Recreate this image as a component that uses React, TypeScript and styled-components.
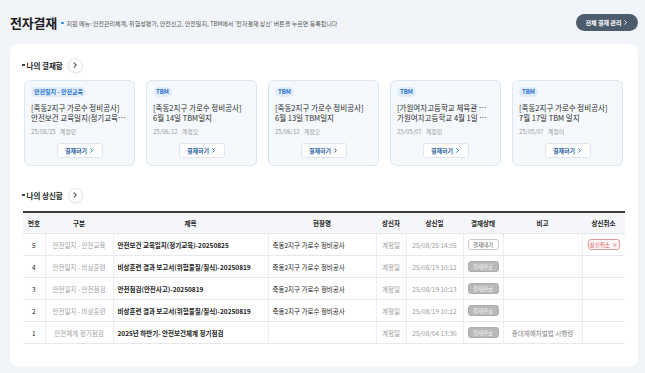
import React from "react";
import styled, { createGlobalStyle } from "styled-components";

const GlobalStyle = createGlobalStyle`
  body {
    margin: 0;
    background: #f1f4f9;
    font-family: "Noto Sans CJK KR", "Noto Sans", sans-serif;
    color: #222;
  }
`;

const Page = styled.div`
  width: 645px;
  height: 373px;
  overflow: hidden;
`;

const Header = styled.div`
  height: 44px;
  display: flex;
  align-items: center;
  padding: 0 7px 0 10px;
`;

const Title = styled.h1`
  margin: 0;
  font-size: 13px;
  font-weight: 700;
  color: #1d1d1d;
  letter-spacing: -0.2px;
`;

const Hint = styled.span`
  margin-left: 4px;
  font-size: 6px;
  color: #555;
  display: flex;
  align-items: center;
  margin-top: 2px;
  &::before {
    content: "";
    width: 2.5px;
    height: 2.5px;
    border-radius: 50%;
    background: #2b8ad9;
    margin-right: 3px;
  }
`;

const ManageButton = styled.button`
  margin-left: auto;
  width: 62px;
  height: 17px;
  border: none;
  border-radius: 9px;
  background: #4c5c6c;
  color: #fff;
  font-family: inherit;
  font-size: 6px;
  font-weight: 700;
  padding: 0;
  display: flex;
  align-items: center;
  justify-content: center;
  gap: 2px;
`;

const Panel = styled.div`
  margin: 0 7px 0 10px;
  background: #fff;
  border-radius: 8px;
  padding: 14px 13px 24px 12px;
  height: 322px;
  box-sizing: border-box;
`;

const SectionHead = styled.div<{ $top?: number }>`
  display: flex;
  align-items: center;
  height: 14px;
  margin-top: ${(p) => p.$top ?? 0}px;
`;

const SectionTitle = styled.span`
  display: flex;
  align-items: center;
  font-size: 7.5px;
  font-weight: 700;
  color: #1d1d1d;
  &::before {
    content: "";
    width: 2.5px;
    height: 2.5px;
    background: #444;
    margin-right: 2px;
  }
`;

const CircleButton = styled.span`
  margin-left: 5px;
  width: 13px;
  height: 13px;
  border-radius: 50%;
  border: 1px solid #e3e6ea;
  background: #fff;
  box-shadow: 0 1px 2px rgba(0, 0, 0, 0.06);
  display: flex;
  align-items: center;
  justify-content: center;
`;

const CardRow = styled.div`
  display: grid;
  grid-template-columns: repeat(5, 111px);
  gap: 11px;
  margin-top: 8px;
  padding-left: 2px;
`;

const Card = styled.div`
  height: 86px;
  box-sizing: border-box;
  border: 1px solid #d9e6f3;
  border-radius: 6px;
  background: #f5f9fd;
  padding: 6px 6px 0 6px;
  display: flex;
  flex-direction: column;
`;

const Badge = styled.span`
  align-self: flex-start;
  height: 10px;
  line-height: 10px;
  padding: 0 3px;
  border-radius: 5px;
  background: #e2edfa;
  color: #1f6fcf;
  font-size: 6px;
  font-weight: 700;
`;

const CardLine = styled.div`
  font-size: 7.5px;
  line-height: 10px;
  color: #2a2a2a;
  white-space: nowrap;
`;

const CardTitle = styled.div`
  margin-top: 6px;
`;

const CardMeta = styled.div`
  margin-top: 5px;
  font-size: 6px;
  line-height: 8px;
  color: #9a9a9a;
  span + span {
    margin-left: 4px;
  }
`;

const ApproveButton = styled.button`
  align-self: center;
  margin-top: 7px;
  width: 46px;
  height: 15px;
  padding: 0;
  border: 1px solid #dfe5ec;
  border-radius: 3px;
  background: #fff;
  color: #2a5ea5;
  font-family: inherit;
  font-size: 6px;
  font-weight: 700;
  display: flex;
  align-items: center;
  justify-content: center;
  gap: 2px;
`;

const Table = styled.table`
  margin-top: 9px;
  margin-left: 1px;
  width: 602px;
  table-layout: fixed;
  border-collapse: collapse;
  border-top: 2px solid #3b3b3b;
`;

const Th = styled.th`
  height: 20px;
  background: #f4f6f9;
  font-size: 6.5px;
  font-weight: 700;
  color: #222;
  padding: 0;
  text-align: center;
  border-bottom: 1px solid #e6e8ec;
`;

const Td = styled.td<{ $align?: string; $tone?: string; $bold?: boolean }>`
  height: 21px;
  padding: 0 ${(p) => (p.$align === "left" ? "4px" : "0")};
  font-size: 6.5px;
  text-align: ${(p) => p.$align ?? "center"};
  color: ${(p) => p.$tone ?? "#222"};
  font-weight: ${(p) => (p.$bold ? 700 : 400)};
  border-bottom: 1px solid #e6e8ec;
  border-right: 1px solid #eceef1;
  white-space: nowrap;
  &:last-child {
    border-right: none;
  }
`;

const Status = styled.span<{ $done?: boolean }>`
  display: inline-block;
  width: 31px;
  height: 11px;
  line-height: 10px;
  box-sizing: border-box;
  border-radius: 3px;
  font-size: 5.5px;
  border: 1px solid ${(p) => (p.$done ? "#adadad" : "#c9c9c9")};
  background: ${(p) => (p.$done ? "#b8b8b8" : "#fff")};
  color: ${(p) => (p.$done ? "#f4f4f4" : "#555")};
`;

const CancelTag = styled.span`
  display: inline-flex;
  align-items: center;
  justify-content: center;
  gap: 2px;
  width: 32px;
  height: 11px;
  box-sizing: border-box;
  border-radius: 3px;
  border: 1px solid #e39a9a;
  background: #fff6f6;
  color: #d05656;
  font-size: 5.5px;
`;

const Chevron = ({ size = 5, color = "currentColor" }: { size?: number; color?: string }) => (
  <svg width={size} height={size} viewBox="0 0 10 10" fill="none">
    <path d="M3.5 1.5 L7 5 L3.5 8.5" stroke={color} strokeWidth="1.8" strokeLinecap="round" strokeLinejoin="round" />
  </svg>
);

const cards = [
  { badge: "안전일지 - 안전교육", site: "[죽동2지구 가로수 정비공사]", title: "안전보건 교육일지(정기교육…", date: "25/08/25", user: "계정민" },
  { badge: "TBM", site: "[죽동2지구 가로수 정비공사]", title: "6월 14일 TBM일지", date: "25/06/12", user: "계정오" },
  { badge: "TBM", site: "[죽동2지구 가로수 정비공사]", title: "6월 13일 TBM일지", date: "25/06/12", user: "계정오" },
  { badge: "TBM", site: "[가원여자고등학교 체육관 …", title: "가원여자고등학교 4월 1일 …", date: "25/05/07", user: "계정민" },
  { badge: "TBM", site: "[죽동2지구 가로수 정비공사]", title: "7월 17일 TBM 일지", date: "25/05/07", user: "계정이" },
];

const rows = [
  { no: 5, kind: "안전일지 - 안전교육", title: "안전보건 교육일지(정기교육)-20250825", site: "죽동2지구 가로수 정비공사", date: "25/08/25 14:05", done: false, note: "", cancel: true },
  { no: 4, kind: "안전일지 - 비상훈련", title: "비상훈련 결과 보고서(위험물질/질식)-20250819", site: "죽동2지구 가로수 정비공사", date: "25/08/19 10:12", done: true, note: "", cancel: false },
  { no: 3, kind: "안전일지 - 안전점검", title: "안전점검(안전사고)-20250819", site: "죽동2지구 가로수 정비공사", date: "25/08/19 10:13", done: true, note: "", cancel: false },
  { no: 2, kind: "안전일지 - 비상훈련", title: "비상훈련 결과 보고서(위험물질/질식)-20250819", site: "죽동2지구 가로수 정비공사", date: "25/08/19 10:12", done: true, note: "", cancel: false },
  { no: 1, kind: "안전체계 정기점검", title: "2025년 하반기- 안전보건체계 정기점검", site: "", date: "25/08/04 13:30", done: true, note: "중대재해처벌법 시행령", cancel: false },
];

const cols = [22, 68, 155, 108, 30, 57, 40, 79, 43];
const heads = ["번호", "구분", "제목", "현장명", "상신자", "상신일", "결재상태", "비고", "상신취소"];

export default function App() {
  return (
    <Page>
      <GlobalStyle />
      <Header>
        <Title>전자결재</Title>
        <Hint>지원 메뉴: 안전관리체계, 위험성평가, 안전신고, 안전일지, TBM에서 '전자결재 상신' 버튼을 누르면 등록됩니다</Hint>
        <ManageButton>
          전체 결재 관리 <Chevron size={5} />
        </ManageButton>
      </Header>
      <Panel>
        <SectionHead>
          <SectionTitle>나의 결재함</SectionTitle>
          <CircleButton>
            <Chevron size={6} color="#555" />
          </CircleButton>
        </SectionHead>
        <CardRow>
          {cards.map((c, i) => (
            <Card key={i}>
              <Badge>{c.badge}</Badge>
              <CardTitle>
                <CardLine>{c.site}</CardLine>
                <CardLine>{c.title}</CardLine>
              </CardTitle>
              <CardMeta>
                <span>{c.date}</span>
                <span>{c.user}</span>
              </CardMeta>
              <ApproveButton>
                결재하기 <Chevron size={5} />
              </ApproveButton>
            </Card>
          ))}
        </CardRow>
        <SectionHead $top={22}>
          <SectionTitle>나의 상신함</SectionTitle>
          <CircleButton>
            <Chevron size={6} color="#555" />
          </CircleButton>
        </SectionHead>
        <Table>
          <colgroup>
            {cols.map((w, i) => (
              <col key={i} style={{ width: w }} />
            ))}
          </colgroup>
          <thead>
            <tr>
              {heads.map((h) => (
                <Th key={h}>{h}</Th>
              ))}
            </tr>
          </thead>
          <tbody>
            {rows.map((r) => (
              <tr key={r.no}>
                <Td>{r.no}</Td>
                <Td $tone="#a0a0a0">{r.kind}</Td>
                <Td $align="left" $bold>
                  {r.title}
                </Td>
                <Td $align="left">{r.site}</Td>
                <Td $tone="#9a9a9a">계정일</Td>
                <Td $tone="#9a9a9a">{r.date}</Td>
                <Td>
                  <Status $done={r.done}>{r.done ? "결재완료" : "결재대기"}</Status>
                </Td>
                <Td $tone="#888">{r.note}</Td>
                <Td>
                  {r.cancel && (
                    <CancelTag>
                      상신취소 <span style={{ fontSize: 6 }}>×</span>
                    </CancelTag>
                  )}
                </Td>
              </tr>
            ))}
          </tbody>
        </Table>
      </Panel>
    </Page>
  );
}
